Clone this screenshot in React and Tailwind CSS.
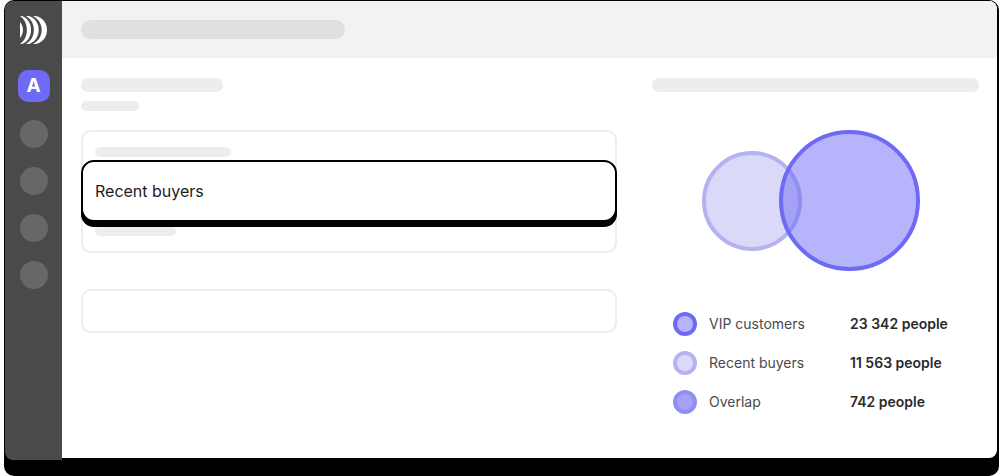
import React from 'react';

const navItems = ['Campaigns', 'Audiences', 'Reports', 'Settings'];

const segments = [
  { name: 'VIP customers', count: '23 342 people', dot: 'bg-[#b6b4fa] border-[#6f6af6]' },
  { name: 'Recent buyers', count: '11 563 people', dot: 'bg-[#dad9f8] border-[#b4b2f1]' },
  { name: 'Overlap', count: '742 people', dot: 'bg-[#a5a1f5] border-[#918ef3]' }
];

function Logo() {
  return (
    <svg viewBox="0 0 28 30" className="w-7 h-[30px]" fill="white" aria-hidden="true">
      <path d="M0 7C4 12 4 18 0 23Z" />
      <path d="M0 1H2C14 5 14 25 2 29H0C9.3 23 9.3 7 0 1Z" />
      <path d="M6 1H9C22 5 22 25 9 29H6C16.6 23 16.6 7 6 1Z" />
      <path d="M13 1H15C31 3 31 27 15 29H13C24.6 23 24.6 7 13 1Z" />
    </svg>
  );
}

function Sidebar() {
  return (
    <nav className="w-[57px] shrink-0 bg-[#4a4a4a] rounded-l-lg flex flex-col items-center pt-3.5">
      <Logo />
      <button className="mt-[25px] w-8 h-8 rounded-[10px] bg-[#6f6af6] text-white text-[19px] leading-8 font-bold">
        A
      </button>
      <div className="mt-[18px] flex flex-col gap-[19px]">
        {navItems.map((item) => (
          <button key={item} aria-label={item} className="w-7 h-7 rounded-full bg-[#676767]" />
        ))}
      </div>
    </nav>
  );
}

function AudienceForm() {
  return (
    <section className="flex-1 min-w-0">
      <div className="w-[142px] h-3.5 rounded-full bg-[#ededed]" />
      <div className="mt-[9px] w-[58px] h-[10px] rounded-full bg-[#ededed]" />

      {/* Selected segment */}
      <div className="mt-[19px] rounded-[10px] border-2 border-[#ededed] pt-[15px] pb-[15px]">
        <div className="ml-3 w-[136px] h-[10px] rounded-full bg-[#ededed]" />
        <div className="relative z-10 -mx-0.5 mt-[3px]">
          <button className="block w-full h-[62px] rounded-[13px] border-2 border-black bg-white px-3 text-left text-base text-[#1d1d1d] shadow-[0_5px_0_#000]">
            Recent buyers
          </button>
        </div>
        <div className="ml-3 mt-1 w-[81px] h-[10px] rounded-full bg-[#ededed]" />
      </div>

      <div className="mt-9 h-11 rounded-[10px] border-2 border-[#ededed]" />
    </section>
  );
}

function OverlapChart() {
  return (
    <svg
      viewBox="0 0 220 142"
      className="mt-[38px] ml-[50px] w-[220px] h-[142px]"
      role="img"
      aria-label="Overlap of VIP customers and recent buyers"
    >
      <defs>
        <clipPath id="vip">
          <circle cx="147.5" cy="70.5" r="70" />
        </clipPath>
      </defs>
      <circle cx="50" cy="71" r="48" fill="#dad9f8" stroke="#b4b2f1" strokeWidth="4" />
      <circle cx="147.5" cy="70.5" r="68.5" fill="#b6b4fa" />
      <g clipPath="url(#vip)">
        <circle cx="50" cy="71" r="48" fill="#a5a1f5" stroke="#918ef3" strokeWidth="4" />
      </g>
      <circle cx="147.5" cy="70.5" r="68.5" fill="none" stroke="#6f6af6" strokeWidth="4" />
    </svg>
  );
}

function Legend() {
  return (
    <ul className="mt-10 ml-[21px] flex flex-col gap-[15px]">
      {segments.map((segment) => (
        <li key={segment.name} className="flex items-center h-6 text-sm">
          <span className={`w-6 h-6 shrink-0 rounded-full border-4 ${segment.dot}`} />
          <span className="ml-3 w-[141px] text-[#4a4a4a]">{segment.name}</span>
          <span className="font-semibold text-[#2b2b2b] whitespace-nowrap">{segment.count}</span>
        </li>
      ))}
    </ul>
  );
}

export default function App() {
  return (
    <div className="min-h-screen flex bg-white px-1 font-['Inter',sans-serif]">
      <div className="flex-1 flex bg-black rounded-[10px] pt-px pl-px pr-0.5 pb-4">
        <Sidebar />
        <div className="flex-1 min-w-0 mb-0.5 flex flex-col bg-white rounded-r-lg overflow-hidden">
          <header className="bg-[#f2f2f2] h-[57px] flex items-center px-[19px]">
            <div className="w-[264px] h-[19px] rounded-full bg-[#e0e0e0]" />
          </header>
          <main className="flex gap-[35px] pl-[19px] pr-[18px] pt-5">
            <AudienceForm />
            <aside className="w-[327px] shrink-0">
              <div className="h-3.5 rounded-full bg-[#ededed]" />
              <OverlapChart />
              <Legend />
            </aside>
          </main>
        </div>
      </div>
    </div>
  );
}
